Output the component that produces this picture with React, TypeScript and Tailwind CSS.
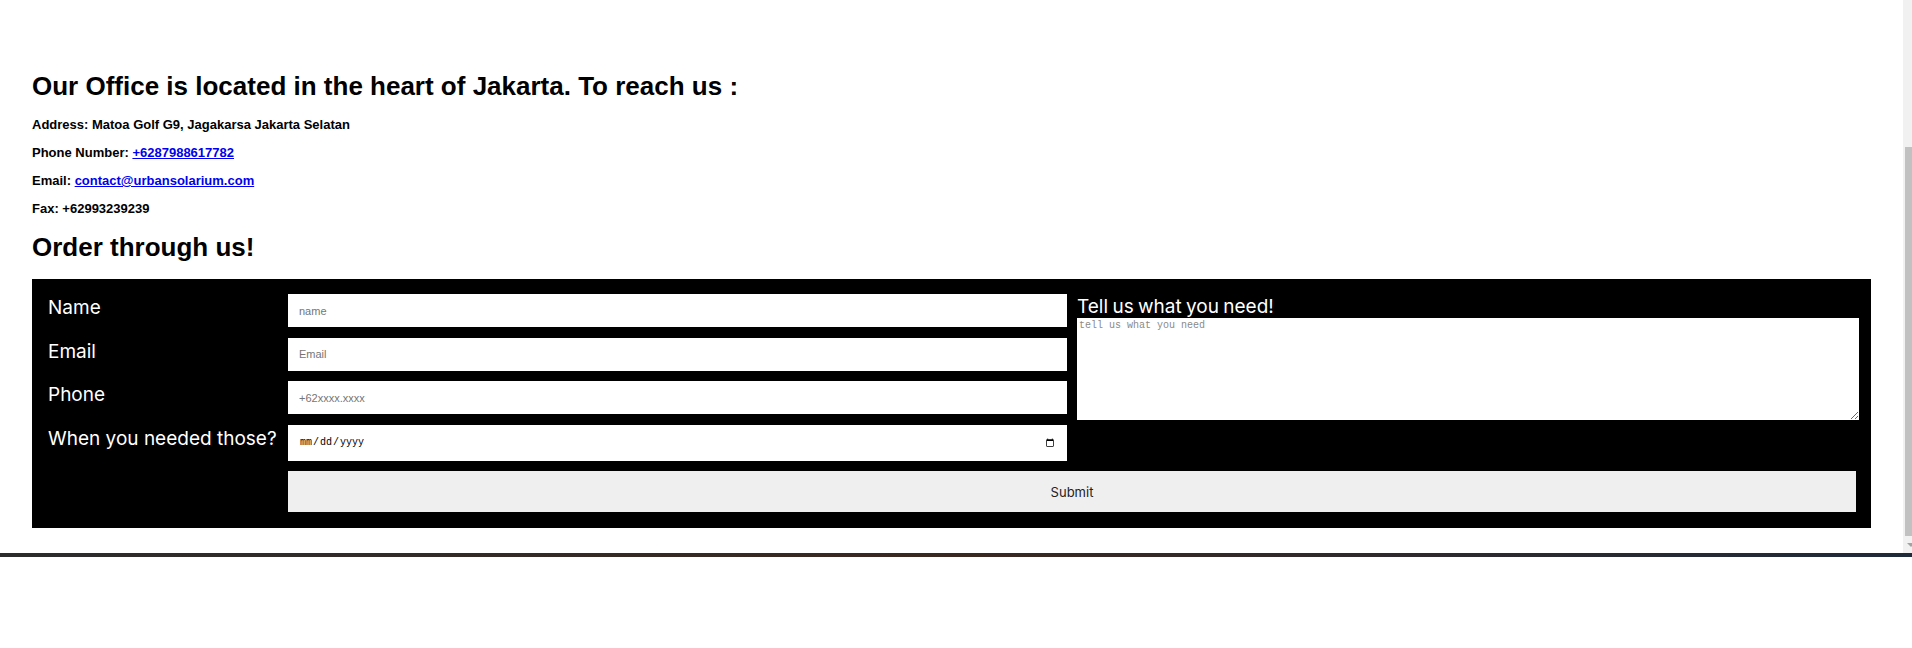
import React from "react";

const infoRows = [
  { label: "Address:", value: "Matoa Golf G9, Jagakarsa Jakarta Selatan" },
  { label: "Phone Number:", value: "+6287988617782", href: "tel:+6287988617782" },
  { label: "Email:", value: "contact@urbansolarium.com", href: "mailto:contact@urbansolarium.com" },
  { label: "Fax:", value: "+62993239239" },
];

const fields = [
  { label: "Name", type: "text", placeholder: "name" },
  { label: "Email", type: "email", placeholder: "Email" },
  { label: "Phone", type: "tel", placeholder: "+62xxxx.xxxx" },
];

function FakeScrollbar() {
  return (
    <div className="w-[9px] h-full bg-[#f1f1f1] flex flex-col">
      <div className="h-[147px]" />
      <div className="ml-[2px] h-[389px] bg-[#c1c1c1]" />
      <div className="flex-1 flex items-center justify-end">
        <div className="w-0 h-0 border-l-[4px] border-r-[4px] border-t-[4px] border-l-transparent border-r-transparent border-t-[#a3a3a3] mr-[-3px]" />
      </div>
    </div>
  );
}

export default function App() {
  return (
    <div className="w-[1912px] h-[648px] bg-white flex flex-col overflow-hidden font-['Liberation_Sans',Arial,sans-serif]">
      <div className="h-[553px] flex">
        <div className="flex-1 px-[32px] pt-[71px]">
          {/* Contact info */}
          <h2 className="text-[26px] leading-[30px] font-bold text-black">
            Our Office is located in the heart of Jakarta. To reach us :
          </h2>
          <div className="mt-[16px] flex flex-col gap-[13px]">
            {infoRows.map((row) => (
              <p key={row.label} className="text-[13px] leading-[15px] font-bold text-black">
                {row.label}{" "}
                {row.href ? (
                  <a href={row.href} className="text-[#0000ee] underline">
                    {row.value}
                  </a>
                ) : (
                  row.value
                )}
              </p>
            ))}
          </div>

          <h2 className="mt-[16px] text-[26px] leading-[30px] font-bold text-black">
            Order through us!
          </h2>

          {/* Order form */}
          <form
            className="mt-[17px] bg-black pt-[15px] pb-[16px] pl-[16px] pr-[12px]"
            onSubmit={(e) => e.preventDefault()}
          >
            <div className="grid grid-cols-[240px_779px_792px] gap-y-[10.5px]">
              {fields.map((f, i) => (
                <React.Fragment key={f.label}>
                  <label className="pt-[2px] text-[19px] leading-[24px] text-white font-['Inter',sans-serif]">
                    {f.label}
                  </label>
                  <input
                    type={f.type}
                    placeholder={f.placeholder}
                    className="h-[33px] bg-white pl-[11px] text-[11px] text-black font-['Liberation_Sans',Arial,sans-serif] placeholder:text-[#757575] outline-none"
                  />
                  {i === 0 && (
                    <div className="row-span-4 pl-[10px] flex flex-col self-start">
                      <label className="pt-[2px] text-[19px] leading-[22px] text-white font-['Inter',sans-serif] [word-spacing:-1px]">
                        Tell us what you need!
                      </label>
                      <textarea
                        placeholder="tell us what you need"
                        className="h-[102px] w-[782px] bg-white px-[2px] py-[2px] text-[10px] leading-[12px] font-['Liberation_Mono',monospace] text-black placeholder:text-[#8a8a8a] outline-none"
                      />
                    </div>
                  )}
                </React.Fragment>
              ))}
              <label className="pt-[2px] text-[19px] leading-[24px] text-white font-['Inter',sans-serif]">
                When you needed those?
              </label>
              <input
                type="date"
                className="h-[36px] bg-white pl-[11px] pr-[10px] text-[10px] text-black font-['Liberation_Mono',monospace] outline-none"
              />
              <div />
              <button
                type="submit"
                className="col-span-2 w-[1568px] h-[41px] pt-[2px] bg-[#efefef] text-[13px] text-[#222] font-['Inter',sans-serif]"
              >
                Submit
              </button>
            </div>
          </form>
        </div>
        <FakeScrollbar />
      </div>
      <div className="h-[4px] bg-gradient-to-r from-[#2c2c2c] via-[#3a2820] to-[#1f2a3a]" />
      <div className="flex-1 bg-white" />
    </div>
  );
}
